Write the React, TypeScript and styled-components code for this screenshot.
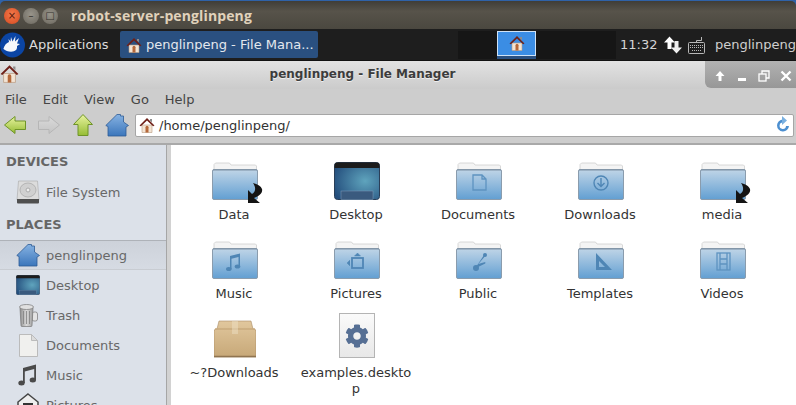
import React, { useId } from 'react';
import styled, { createGlobalStyle } from 'styled-components';
import { FaCog } from 'react-icons/fa';

const GlobalStyle = createGlobalStyle`
  html, body {
    margin: 0;
    padding: 0;
    background: #fff;
    overflow: hidden;
    font-family: "DejaVu Sans", sans-serif;
  }
`;

const Screen = styled.div`
  width: 796px;
  height: 405px;
  overflow: hidden;
  display: flex;
  flex-direction: column;
  background: #2f62a8;
`;

/* remote desktop title bar */
const SessionBar = styled.div`
  height: 29px;
  flex: none;
  margin-top: 1px;
  margin-bottom: -1px;
  display: flex;
  align-items: center;
  padding-left: 4px;
  border-radius: 5px 5px 0 0;
  background: linear-gradient(#3f3d38, #57534a 35%, #4a473f);
`;

const SessionButtons = styled.div`
  display: flex;
  align-items: center;
  gap: 3px;
  width: 67px;
  flex: none;
`;

const SessionButton = styled.div<{ $close?: boolean }>`
  width: 16px;
  height: 16px;
  border-radius: 50%;
  display: flex;
  align-items: center;
  justify-content: center;
  color: ${(p) => (p.$close ? '#5a1a0a' : '#35332e')};
  font-size: 10px;
  line-height: 1;
  background: ${(p) =>
    p.$close ? 'radial-gradient(circle at 50% 40%, #f47a4c, #d4491f)' : 'radial-gradient(circle at 50% 40%, #98948a, #6b675e)'};
`;

const SessionTitle = styled.div`
  font-family: "Open Sans", sans-serif;
  font-weight: 700;
  font-size: 14px;
  color: #e0d2bb;
  letter-spacing: 0.12px;
`;

/* xfce panel */
const Panel = styled.div`
  height: 31px;
  flex: none;
  display: flex;
  align-items: center;
  background: #1e1e1e;
  border-bottom: 1px solid #111;
  color: #d8d8d8;
  font-size: 13px;
`;

const AppMenu = styled.div`
  display: flex;
  align-items: center;
  gap: 4px;
  width: 120px;
  flex: none;
  color: #dcdcdc;
`;

const TaskButton = styled.div`
  width: 198px;
  height: 27px;
  flex: none;
  display: flex;
  align-items: center;
  gap: 4px;
  padding-left: 6px;
  box-sizing: border-box;
  background: #2a5080;
  border-radius: 2px;
  color: #e4e8ee;
  white-space: nowrap;
`;

const Pager = styled.div`
  margin-left: 140px;
  width: 158px;
  height: 28px;
  flex: none;
  display: grid;
  grid-template-columns: 39px 39px 39px 41px;
  background: #161616;
`;

const PagerCell = styled.div<{ $active?: boolean }>`
  box-sizing: border-box;
  display: flex;
  align-items: center;
  justify-content: center;
  ${(p) =>
    p.$active
      ? `background: #3b8de4; border: 1px solid #cfe2f6; height: 25px; box-shadow: 0 3px 0 #2a5080;`
      : ''}
`;

const Clock = styled.div`
  margin-left: 4px;
  width: 41px;
  flex: none;
  color: #d4d4d4;
`;

const Tray = styled.div`
  display: flex;
  align-items: center;
  gap: 6px;
  width: 54px;
  height: 27px;
  flex: none;
  box-sizing: border-box;
  padding-left: 3px;
`;

const UserName = styled.div`
  white-space: nowrap;
  color: #cfcfcf;
`;

/* file manager window */
const Window = styled.div`
  flex: 1;
  min-height: 0;
  display: flex;
  flex-direction: column;
  background: #cdcdcd;
`;

const WindowTitleBar = styled.div`
  height: 28px;
  flex: none;
  display: flex;
  align-items: flex-start;
  background: linear-gradient(#e2e2e2, #cbcbcb);
`;

const WindowIcon = styled.div`
  width: 20px;
  flex: none;
  padding-top: 3px;
`;

const WindowTitle = styled.div`
  flex: 1;
  text-align: center;
  font-size: 12px;
  font-weight: 700;
  color: #3c3c3c;
  line-height: 26px;
  text-shadow: 0 1px 0 #eee;
`;

const WindowControls = styled.div`
  width: 91px;
  height: 27px;
  flex: none;
  display: flex;
  align-items: center;
  gap: 10px;
  padding: 3px 0 0 9px;
  box-sizing: border-box;
  background: linear-gradient(#b2b2b2, #979797);
  border-radius: 0 0 0 6px;
`;

const MenuBar = styled.div`
  height: 21px;
  flex: none;
  display: flex;
  align-items: center;
  padding-left: 5px;
  gap: 16px;
  font-size: 13px;
  color: #454545;
`;

const Toolbar = styled.div`
  height: 35px;
  flex: none;
  box-sizing: border-box;
  display: flex;
  align-items: center;
  padding: 0 2px 3px 4px;
  border-bottom: 2px solid #a9a9a9;
  background: #cdcdcd;
`;

const ToolIcon = styled.div<{ $width: number }>`
  width: ${(p) => p.$width}px;
  flex: none;
  display: flex;
  align-items: center;
`;

const LocationEntry = styled.div`
  flex: 1;
  height: 23px;
  box-sizing: border-box;
  display: flex;
  align-items: center;
  gap: 4px;
  padding: 0 3px;
  background: #fff;
  border: 1px solid #a6a6a6;
  border-radius: 2px;
  font-size: 13px;
  color: #333;
`;

const LocationText = styled.div`
  flex: 1;
`;

const Body = styled.div`
  flex: 1;
  min-height: 0;
  display: flex;
`;

const Sidebar = styled.div`
  width: 166px;
  flex: none;
  background: #dce1e9;
  overflow: hidden;
`;

const SectionTitle = styled.div<{ $height: number; $ruled?: boolean }>`
  height: ${(p) => p.$height}px;
  display: flex;
  align-items: center;
  padding: ${(p) => (p.$ruled ? '2px' : '0')} 0 0 6px;
  font-size: 13px;
  font-weight: 700;
  color: #666;
  box-sizing: border-box;
  border-bottom: ${(p) => (p.$ruled ? '1px solid #aeb2b8' : 'none')};
`;

const SideRow = styled.div<{ $selected?: boolean }>`
  height: ${(p) => (p.$selected ? 29 : 30)}px;
  flex: none;
  box-sizing: border-box;
  display: flex;
  align-items: center;
  gap: 6px;
  padding-left: 16px;
  font-size: 13px;
  color: #686868;
  background: ${(p) => (p.$selected ? 'linear-gradient(#cdd2da, #d6dbe3)' : 'transparent')};
  border-bottom: ${(p) => (p.$selected ? '1px solid #c8ccd2' : 'none')};
`;

const SideIcon = styled.div`
  width: 24px;
  height: 24px;
  flex: none;
  display: flex;
  align-items: center;
  justify-content: center;
`;

const Splitter = styled.div`
  width: 5px;
  flex: none;
  background: #d2d2d2;
  border-left: 1px solid #a6a6a6;
  box-sizing: border-box;
`;

const IconGrid = styled.div`
  flex: 1;
  background: #fff;
  padding: 7px 0 0 2px;
  display: grid;
  grid-template-columns: repeat(5, 122px);
  grid-auto-rows: 79px;
  align-content: start;
`;

const FileItem = styled.div`
  display: flex;
  flex-direction: column;
  align-items: center;
`;

const FileIconBox = styled.div`
  height: 48px;
  flex: none;
  display: flex;
  align-items: flex-end;
  margin-left: 2px;
`;

const FileLabel = styled.div`
  margin-top: 7px;
  width: 116px;
  text-align: center;
  font-size: 13px;
  line-height: 16px;
  color: #333;
  word-break: break-all;
`;

const DesktopFile = styled.div`
  width: 36px;
  height: 45px;
  box-sizing: border-box;
  display: flex;
  align-items: center;
  justify-content: center;
  border: 1px solid #b4b4b4;
  background: linear-gradient(#fafafa, #e8e8e8);
  color: #566f94;
  font-size: 24px;
`;

function HomeIcon({ size = 16 }: { size?: number }) {
  return (
    <svg width={size} height={size} viewBox="0 0 16 16">
      <path d="M3 8h10v7.5H3z" fill="#f3e4d4" stroke="#b89a80" strokeWidth="0.6" />
      <path d="M6.5 10.2a1.5 1.5 0 0 1 3 0v5.3h-3z" fill="#b5683a" />
      <path d="M0.5 8.5 8 1l7.5 7.5-1.4 0.8L8 3.4 1.9 9.3z" fill="#6e2018" />
      <path d="M11 2h2v3.5l-2-2z" fill="#8c8c8c" />
    </svg>
  );
}

function XfceLogo() {
  return (
    <svg width="25" height="26" viewBox="0 0 25 26">
      <circle cx="12.5" cy="13" r="12.5" fill="#0b45a4" />
      <path
        d="M3.500 16.500C4.500 13 6.500 11 9 10l-0.500-3 2 2.500L11 5l1.500 4.500L15.500 4l-0.500 5.500L19 6l-2 5.500 3 0.500-3 2c0.500 3-1 5-4 5.500-3.500 0.500-7.500-0.500-9.500-2.500z"
        fill="#f6f8fb"
      />
    </svg>
  );
}

function ArrowIcon({ dir, tone }: { dir: 'left' | 'right' | 'up'; tone: 'green' | 'gray' }) {
  const id = useId();
  const top = tone === 'green' ? '#e8f3a0' : '#dadada';
  const bottom = tone === 'green' ? '#96bd34' : '#c4c4c4';
  const line = tone === 'green' ? '#6f9428' : '#b6b6b6';
  const shape = {
    left: { w: 22, h: 18, points: '0.500,9 11,0.500 11,5 21.500,5 21.500,13.500 11,13.500 11,17.500' },
    right: { w: 22, h: 18, points: '21.500,9 11,0.500 11,5 0.500,5 0.500,13.500 11,13.500 11,17.500' },
    up: { w: 20, h: 22, points: '10,0.500 19.500,10.500 15,10.500 15,21.500 5,21.500 5,10.500 0.500,10.500' },
  }[dir];
  return (
    <svg width={shape.w} height={shape.h} viewBox={`0 0 ${shape.w} ${shape.h}`}>
      <defs>
        <linearGradient id={id} x1="0" y1="0" x2="0" y2="1">
          <stop offset="0" stopColor={top} />
          <stop offset="1" stopColor={bottom} />
        </linearGradient>
      </defs>
      <polygon points={shape.points} fill={`url(#${id})`} stroke={line} strokeWidth="1" />
    </svg>
  );
}

function BlueHome({ size = 24 }: { size?: number }) {
  const id = useId();
  return (
    <svg width={size} height={size} viewBox="0 0 24 24">
      <defs>
        <linearGradient id={id} x1="0" y1="0" x2="0" y2="1">
          <stop offset="0" stopColor="#86b2e2" />
          <stop offset="1" stopColor="#3b76bb" />
        </linearGradient>
      </defs>
      <path
        d="M0.800 12.500 12 1.500h3.500v1.500h3v6l5 3.500-2.500 1.500V23H3v-9.500z"
        fill={`url(#${id})`}
        stroke="#2d5c96"
        strokeWidth="0.8"
      />
    </svg>
  );
}

function ReloadIcon() {
  return (
    <svg width="16" height="18" viewBox="0 0 16 18">
      <path d="M9 3.500A6 6 0 1 0 15 10h-3a3.200 3.200 0 1 1-3-3.400z" fill="#4c8fd0" />
      <path d="M8 0v9l5-4.500z" fill="#7ab0e0" />
    </svg>
  );
}

function TransferIcon() {
  return (
    <svg width="18" height="18" viewBox="0 0 18 18">
      <path d="M5.500 0.500 0 6.500h3.500V13h4V6.500H11z" fill="#fff" />
      <path d="M12.500 17.500 18 11.500h-3.500V5h-4v6.500H7z" fill="#f0f0f0" />
    </svg>
  );
}

function KeyboardIcon() {
  return (
    <svg width="17" height="18" viewBox="0 0 17 18" fill="none" stroke="#b8b8b8">
      <rect x="0.500" y="6.500" width="16" height="11" rx="1" />
      <path d="M8.500 6.500V4.500h5V1" />
      <path d="M2 9.500h13M2 11.500h13M4 14.500h9" strokeDasharray="1 1" />
    </svg>
  );
}

function DriveIcon() {
  return (
    <svg width="24" height="24" viewBox="0 0 24 24">
      <path d="M2.500 1h19l1.500 19H1z" fill="#dcdcdc" stroke="#a8a8a8" strokeWidth="0.6" />
      <ellipse cx="12" cy="10" rx="8" ry="7" fill="#d0d0d0" stroke="#b4b4b4" />
      <circle cx="12" cy="10" r="2" fill="#eee" stroke="#aaa" />
      <path d="M1 19h22v3.500a1 1 0 0 1-1 1H2a1 1 0 0 1-1-1z" fill="#4f4f4f" />
    </svg>
  );
}

function TrashIcon() {
  const id = useId();
  return (
    <svg width="19" height="24" viewBox="0 0 19 24">
      <defs>
        <linearGradient id={id} x1="0" y1="0" x2="1" y2="0">
          <stop offset="0" stopColor="#8e8e8e" />
          <stop offset="0.5" stopColor="#d8d8d8" />
          <stop offset="1" stopColor="#a0a0a0" />
        </linearGradient>
      </defs>
      <rect x="13" y="9" width="5.500" height="9" rx="2" fill="#e4e4e4" stroke="#777" strokeWidth="0.7" />
      <path d="M1 5h13l-1 17.500a1 1 0 0 1-1 1H3a1 1 0 0 1-1-1z" fill={`url(#${id})`} stroke="#777" strokeWidth="0.7" />
      <path d="M4.500 8v13M7.500 8v13M10.500 8v13" stroke="#808080" strokeWidth="0.8" />
      <ellipse cx="7.500" cy="4" rx="7" ry="2.500" fill="#e0e0e0" stroke="#777" strokeWidth="0.7" />
    </svg>
  );
}

function DocIcon() {
  return (
    <svg width="19" height="23" viewBox="0 0 19 23">
      <path d="M0.500 0.500h12l6 6v16h-18z" fill="#f0f0ee" stroke="#bbb" />
      <path d="M12.500 0.500v6h6z" fill="#dcdcdc" stroke="#bbb" />
    </svg>
  );
}

function MusicIcon() {
  return (
    <svg width="20" height="22" viewBox="0 0 20 22">
      <path d="M5 4 18 0.500V16h-1.800V5L6.800 7.500V19H5z" fill="#4a4a4a" />
      <ellipse cx="3.500" cy="19" rx="3.200" ry="2.500" fill="#4a4a4a" />
      <ellipse cx="14.800" cy="16" rx="3.200" ry="2.500" fill="#4a4a4a" />
    </svg>
  );
}

function PicturesIcon() {
  return (
    <svg width="22" height="24" viewBox="0 0 22 24">
      <path d="M11 1 21 9v14H1V9z" fill="#eee" stroke="#444" strokeWidth="1.500" />
      <rect x="6" y="10" width="10" height="9" fill="#333" />
    </svg>
  );
}

function DesktopIcon({ width, height }: { width: number; height: number }) {
  const id = useId();
  return (
    <svg width={width} height={height} viewBox="0 0 46 38">
      <defs>
        <radialGradient id={id} cx="0.68" cy="0.5" r="0.75">
          <stop offset="0" stopColor="#5fa4bd" />
          <stop offset="1" stopColor="#234d7c" />
        </radialGradient>
      </defs>
      <rect x="0.500" y="0.500" width="45" height="37" rx="3" fill={`url(#${id})`} stroke="#2a3f58" />
      <path d="M0.500 6V3.500a3 3 0 0 1 3-3h39a3 3 0 0 1 3 3V6z" fill="#1c1c1c" />
      <rect x="7" y="29" width="32" height="8.500" fill="#3a5a7e" stroke="#7f9dbb" strokeWidth="0.5" />
    </svg>
  );
}

function PackageIcon() {
  const id = useId();
  return (
    <svg width="42" height="38" viewBox="0 0 42 38">
      <defs>
        <linearGradient id={id} x1="0" y1="0" x2="0" y2="1">
          <stop offset="0" stopColor="#e1c79d" />
          <stop offset="1" stopColor="#c7a878" />
        </linearGradient>
      </defs>
      <path d="M3 9 5 1h32l2 8 3 1v27H0V10z" fill={`url(#${id})`} stroke="#a88c64" strokeWidth="0.6" />
      <path d="M1 9h40" stroke="#c8aa7c" strokeWidth="1.500" />
      <rect x="18" y="1" width="6" height="13" fill="#f0e2c8" opacity="0.45" />
      <path d="M0 36.500h42" stroke="#8f7450" strokeWidth="1.500" />
    </svg>
  );
}

const glyphs: Record<string, React.ReactNode> = {
  doc: <path d="M17 13h9l4 4v11H17zM26 13v4h4" fill="none" stroke="#5d93c0" strokeWidth="1.300" />,
  download: (
    <g fill="none" stroke="#4f86b5" strokeWidth="1.400">
      <circle cx="23" cy="21" r="7" />
      <path d="M23 16v8M19.500 21l3.500 3.500 3.500-3.500" />
    </g>
  ),
  music: (
    <g fill="#4f86b5">
      <path d="M18 15l10-2.500V25h-1.500v-9l-7 1.800V28H18z" />
      <ellipse cx="16.800" cy="28" rx="2.800" ry="2" />
      <ellipse cx="25.500" cy="25.500" rx="2.800" ry="2" />
    </g>
  ),
  pictures: (
    <g fill="none" stroke="#4f86b5" strokeWidth="1.800">
      <rect x="18" y="17" width="11" height="10" />
      <path d="M23.500 12l3 3h-6zM16 19l-3 3 3 3" fill="#4f86b5" strokeWidth="0.500" />
    </g>
  ),
  public: (
    <g fill="#4f86b5">
      <circle cx="20" cy="27" r="3" />
      <circle cx="29" cy="14" r="2" />
      <path d="M20 26 28 14l1.300 1-7 8 7-2v1.500L20 27z" />
    </g>
  ),
  templates: <path d="M18 12v17h16zM21 20v6h6z" fill="#4f86b5" fillRule="evenodd" />,
  videos: (
    <g fill="none" stroke="#5d93c0" strokeWidth="1.300">
      <rect x="17" y="12" width="13" height="17" />
      <path d="M20 12v17M27 12v17M20 18h7M20 23h7" />
    </g>
  ),
};

function FolderIcon({ glyph, link }: { glyph?: string; link?: boolean }) {
  const id = useId();
  return (
    <svg width="50" height="42" viewBox="0 0 50 42" style={{ overflow: 'visible', marginRight: -4, marginBottom: -4 }}>
      <defs>
        <linearGradient id={id} x1="0" y1="0" x2="0" y2="1">
          <stop offset="0" stopColor="#c0d5e7" />
          <stop offset="1" stopColor="#629fd2" />
        </linearGradient>
      </defs>
      <path d="M2 8V2.500L3.500 1h14L19 3h24.500l1 1v6H2z" fill="#f4f4f4" stroke="#cfcfcf" strokeWidth="0.800" />
      <rect x="0.500" y="7.500" width="45" height="30" rx="1.500" fill={`url(#${id})`} stroke="#8a9cad" />
      <path d="M1 8h44" stroke="#7d90a3" strokeWidth="1" />
      {glyph ? glyphs[glyph] : null}
      {link ? (
        <path
          d="M36 28V41H48L42 36C47 34 51 31 50 27C49 24 45 22 41 21C44 25 44 30 40 32Z"
          fill="#141414"
        />
      ) : null}
    </svg>
  );
}

const files: { name: string; icon: React.ReactNode }[] = [
  { name: 'Data', icon: <FolderIcon link /> },
  { name: 'Desktop', icon: <DesktopIcon width={46} height={38} /> },
  { name: 'Documents', icon: <FolderIcon glyph="doc" /> },
  { name: 'Downloads', icon: <FolderIcon glyph="download" /> },
  { name: 'media', icon: <FolderIcon link /> },
  { name: 'Music', icon: <FolderIcon glyph="music" /> },
  { name: 'Pictures', icon: <FolderIcon glyph="pictures" /> },
  { name: 'Public', icon: <FolderIcon glyph="public" /> },
  { name: 'Templates', icon: <FolderIcon glyph="templates" /> },
  { name: 'Videos', icon: <FolderIcon glyph="videos" /> },
  { name: '~?Downloads', icon: <PackageIcon /> },
  {
    name: 'examples.desktop',
    icon: (
      <DesktopFile>
        <FaCog />
      </DesktopFile>
    ),
  },
];

const places: { name: string; icon: React.ReactNode; selected?: boolean }[] = [
  { name: 'penglinpeng', icon: <BlueHome />, selected: true },
  { name: 'Desktop', icon: <DesktopIcon width={24} height={20} /> },
  { name: 'Trash', icon: <TrashIcon /> },
  { name: 'Documents', icon: <DocIcon /> },
  { name: 'Music', icon: <MusicIcon /> },
  { name: 'Pictures', icon: <PicturesIcon /> },
];

export default function App() {
  return (
    <Screen>
      <GlobalStyle />
      <SessionBar>
        <SessionButtons>
          <SessionButton $close>×</SessionButton>
          <SessionButton>–</SessionButton>
          <SessionButton>□</SessionButton>
        </SessionButtons>
        <SessionTitle>robot-server-penglinpeng</SessionTitle>
      </SessionBar>
      <Panel>
        <AppMenu>
          <XfceLogo />
          Applications
        </AppMenu>
        <TaskButton>
          <HomeIcon />
          penglinpeng - File Mana...
        </TaskButton>
        <Pager>
          <PagerCell />
          <PagerCell $active>
            <HomeIcon />
          </PagerCell>
          <PagerCell />
          <PagerCell />
        </Pager>
        <Clock>11:32</Clock>
        <Tray>
          <TransferIcon />
          <KeyboardIcon />
        </Tray>
        <UserName>penglinpeng</UserName>
      </Panel>
      <Window>
        <WindowTitleBar>
          <WindowIcon>
            <HomeIcon size={19} />
          </WindowIcon>
          <WindowTitle>penglinpeng - File Manager</WindowTitle>
          <WindowControls>
            <svg width="12" height="12" viewBox="0 0 12 12">
              <path d="M6 1 1.500 6H4.500v5h3V6h3z" fill="#fff" />
            </svg>
            <svg width="12" height="12" viewBox="0 0 12 12">
              <rect x="2" y="8" width="8" height="3" fill="#fff" />
            </svg>
            <svg width="12" height="12" viewBox="0 0 12 12" fill="none" stroke="#fff" strokeWidth="1.300">
              <rect x="1" y="4" width="7" height="7" />
              <path d="M4 4V1h7v7H8" />
            </svg>
            <svg width="12" height="12" viewBox="0 0 12 12" stroke="#fff" strokeWidth="2.400">
              <path d="M1.500 1.500l9 9M10.500 1.500l-9 9" />
            </svg>
          </WindowControls>
        </WindowTitleBar>
        <MenuBar>
          <span>File</span>
          <span>Edit</span>
          <span>View</span>
          <span>Go</span>
          <span>Help</span>
        </MenuBar>
        <Toolbar>
          <ToolIcon $width={34}>
            <ArrowIcon dir="left" tone="green" />
          </ToolIcon>
          <ToolIcon $width={35}>
            <ArrowIcon dir="right" tone="gray" />
          </ToolIcon>
          <ToolIcon $width={32}>
            <ArrowIcon dir="up" tone="green" />
          </ToolIcon>
          <ToolIcon $width={30}>
            <BlueHome />
          </ToolIcon>
          <LocationEntry>
            <HomeIcon />
            <LocationText>/home/penglinpeng/</LocationText>
            <ReloadIcon />
          </LocationEntry>
        </Toolbar>
        <Body>
          <Sidebar>
            <SectionTitle $height={32}>DEVICES</SectionTitle>
            <SideRow>
              <SideIcon>
                <DriveIcon />
              </SideIcon>
              File System
            </SideRow>
            <SectionTitle $height={34} $ruled>
              PLACES
            </SectionTitle>
            {places.map((place) => (
              <SideRow key={place.name} $selected={place.selected}>
                <SideIcon>{place.icon}</SideIcon>
                {place.name}
              </SideRow>
            ))}
          </Sidebar>
          <Splitter />
          <IconGrid>
            {files.map((file) => (
              <FileItem key={file.name}>
                <FileIconBox>{file.icon}</FileIconBox>
                <FileLabel>{file.name}</FileLabel>
              </FileItem>
            ))}
          </IconGrid>
        </Body>
      </Window>
    </Screen>
  );
}
